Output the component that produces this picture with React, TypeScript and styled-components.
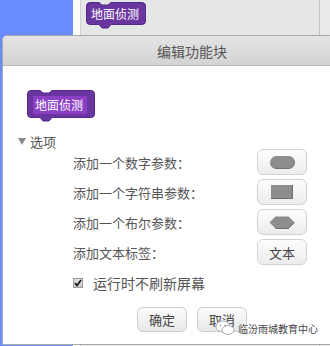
import React from "react";
import styled, { createGlobalStyle } from "styled-components";

const Global = createGlobalStyle`
  html, body { margin: 0; padding: 0; background: #fff; }
  body { font-family: "Noto Sans CJK SC", "Noto Sans", sans-serif; }
`;

const Stage = styled.div`
  position: relative;
  width: 330px;
  height: 346px;
  overflow: hidden;
  display: flex;
  background: #fff;
`;

const Palette = styled.div`
  width: 73px;
  background: #6a8cff;
`;

const Gap = styled.div`
  width: 7px;
  background: #fff;
`;

const Scripts = styled.div`
  flex: 1;
  background: #e5e7e6;
  border-left: 1px solid #cfd1d0;
  border-right: 1px solid #c2c4c3;
  padding: 2px 0 0 5px;
`;

const RightStrip = styled.div`
  width: 10px;
  background: #e9eae9;
`;

const BlockWrap = styled.div<{ $w: number; $h: number; $pad: number }>`
  position: relative;
  width: ${(p) => p.$w}px;
  height: ${(p) => p.$h + 4}px;
  box-sizing: border-box;
  padding: ${(p) => p.$pad}px;
  display: flex;
  align-items: flex-start;
`;

const BlockShape = styled.svg`
  position: absolute;
  left: 0;
  top: 0;
`;

const BlockText = styled.div<{ $hl?: boolean; $w?: number }>`
  position: relative;
  height: 18px;
  ${(p) => (p.$w ? `width: ${p.$w}px;` : "")}
  box-sizing: border-box;
  padding: 0 0 0 2px;
  background: ${(p) => (p.$hl ? "#8b3fc4" : "transparent")};
  color: #fff;
  font-size: 12px;
  line-height: 18px;
  white-space: nowrap;
`;

function blockPath(w: number, h: number) {
  const r = 4, nx = 13, nw = 12, d = 3;
  return `M0.5,${r} Q0.5,0.5 ${r},0.5 L${nx},0.5 L${nx + 3},${d} L${nx + nw - 3},${d} L${nx + nw},0.5 L${w - r},0.5 Q${w - 0.5},0.5 ${w - 0.5},${r} L${w - 0.5},${h - r} Q${w - 0.5},${h - 0.5} ${w - r},${h - 0.5} L${nx + nw},${h - 0.5} L${nx + nw - 3},${h + d} L${nx + 3},${h + d} L${nx},${h - 0.5} L${r},${h - 0.5} Q0.5,${h - 0.5} 0.5,${h - r} Z`;
}

function Block({ w, h, pad, hl, tw }: { w: number; h: number; pad: number; hl?: boolean; tw?: number }) {
  return (
    <BlockWrap $w={w} $h={h} $pad={pad}>
      <BlockShape width={w} height={h + 4} viewBox={`0 0 ${w} ${h + 4}`}>
        <path d={blockPath(w, h)} fill="#6936a0" stroke="#55288a" strokeWidth="1" />
      </BlockShape>
      <BlockText $hl={hl} $w={tw}>地面侦测</BlockText>
    </BlockWrap>
  );
}

const Dialog = styled.div`
  position: absolute;
  left: 2px;
  top: 35px;
  width: 380px;
  height: 310px;
  box-sizing: border-box;
  border: 1px solid #a9a9a9;
  border-radius: 5px 5px 0 0;
  background: #fff;
  display: flex;
  flex-direction: column;
  overflow: hidden;
`;

const TitleBar = styled.div`
  height: 29px;
  flex: none;
  background: linear-gradient(#e4e4e4, #d3d3d3);
  border-bottom: 1px solid #b9b9b9;
  display: flex;
  align-items: center;
  justify-content: center;
  color: #555;
  font-size: 14px;
`;

const Body = styled.div`
  display: flex;
  flex-direction: column;
  padding: 24px 0 0 24px;
`;

const OptionsHeader = styled.div`
  display: flex;
  align-items: center;
  gap: 4px;
  margin: 11px 0 0 -10px;
  height: 16px;
  color: #555;
  font-size: 13px;
`;

const Caret = styled.span`
  width: 0;
  height: 0;
  border-left: 4px solid transparent;
  border-right: 4px solid transparent;
  border-top: 7px solid #8a8a8a;
  margin-left: 1px;
`;

const Rows = styled.div`
  display: flex;
  flex-direction: column;
  gap: 4px;
  margin-left: 46px;
`;

const Row = styled.div`
  display: grid;
  grid-template-columns: 184px 50px;
  align-items: center;
  height: 26px;
`;

const Label = styled.span`
  color: #555;
  font-size: 13px;
  white-space: nowrap;
`;

const ParamButton = styled.div`
  width: 50px;
  height: 26px;
  box-sizing: border-box;
  border: 1px solid #d2d2d2;
  border-radius: 6px;
  background: linear-gradient(#fdfdfd, #ececec);
  display: flex;
  align-items: center;
  justify-content: center;
  color: #444;
  font-size: 13px;
`;

const Pill = styled.span`
  width: 25px;
  height: 13px;
  box-sizing: border-box;
  border-radius: 7px;
  background: #8d8d8d;
  border-right: 1px solid #6f6f6f;
  border-bottom: 1px solid #6f6f6f;
`;

const Rect = styled.span`
  width: 22px;
  height: 14px;
  box-sizing: border-box;
  background: #8d8d8d;
  border-right: 1px solid #6f6f6f;
  border-bottom: 1px solid #6f6f6f;
`;

const CheckRow = styled.label`
  display: flex;
  align-items: center;
  gap: 10px;
  margin: 10px 0 0 46px;
  height: 16px;
  color: #555;
  font-size: 14px;
`;

const CheckBox = styled.span`
  width: 10px;
  height: 10px;
  box-sizing: border-box;
  border: 1px solid #9a9a9a;
  background: linear-gradient(#e2e2e2, #c8c8c8);
  display: flex;
  align-items: center;
  justify-content: center;
`;

const Actions = styled.div`
  display: flex;
  justify-content: center;
  gap: 10px;
  margin: 16px 0 0 -24px;
`;

const ActionButton = styled.div`
  width: 50px;
  height: 25px;
  box-sizing: border-box;
  border: 1px solid #cdcdcd;
  border-radius: 6px;
  background: linear-gradient(#fbfbfb, #e8e8e8);
  display: flex;
  align-items: center;
  justify-content: center;
  color: #444;
  font-size: 13px;
`;

const Watermark = styled.div`
  position: absolute;
  left: 215px;
  top: 320px;
  display: flex;
  align-items: center;
  gap: 3px;
  font-size: 10px;
  color: #444;
  text-shadow: 0 0 2px #fff, 0 0 2px #fff, 0 0 1px #fff;
  white-space: nowrap;
`;

export default function App() {
  return (
    <>
      <Global />
      <Stage>
        <Palette />
        <Gap />
        <Scripts>
          <Block w={60} h={23} pad={3} />
        </Scripts>
        <RightStrip />
        <Dialog>
          <TitleBar>编辑功能块</TitleBar>
          <Body>
            <Block w={68} h={28} pad={6} hl tw={54} />
            <OptionsHeader>
              <Caret />
              选项
            </OptionsHeader>
            <Rows>
              <Row>
                <Label>添加一个数字参数：</Label>
                <ParamButton><Pill /></ParamButton>
              </Row>
              <Row>
                <Label>添加一个字符串参数：</Label>
                <ParamButton><Rect /></ParamButton>
              </Row>
              <Row>
                <Label>添加一个布尔参数：</Label>
                <ParamButton>
                  <svg width="26" height="13" viewBox="0 0 26 13">
                    <path d="M0.5,6.5 L6.5,0.5 L19.5,0.5 L25.5,6.5 L19.5,12.5 L6.5,12.5 Z" fill="#8d8d8d" />
                    <path d="M25.5,6.5 L19.5,12.5 L6.5,12.5" fill="none" stroke="#6f6f6f" strokeWidth="1" />
                  </svg>
                </ParamButton>
              </Row>
              <Row>
                <Label>添加文本标签：</Label>
                <ParamButton>文本</ParamButton>
              </Row>
            </Rows>
            <CheckRow>
              <CheckBox>
                <svg width="8" height="8" viewBox="0 0 8 8">
                  <path d="M1,4 L3,6.5 L7,1" fill="none" stroke="#111" strokeWidth="1.6" />
                </svg>
              </CheckBox>
              运行时不刷新屏幕
            </CheckRow>
            <Actions>
              <ActionButton>确定</ActionButton>
              <ActionButton>取消</ActionButton>
            </Actions>
          </Body>
        </Dialog>
        <Watermark>
          <svg width="20" height="16" viewBox="0 0 20 16">
            <ellipse cx="8" cy="6.5" rx="7" ry="5.5" fill="#fff" stroke="#aaa" strokeWidth="1" />
            <ellipse cx="13" cy="10" rx="6" ry="4.5" fill="#fff" stroke="#aaa" strokeWidth="1" />
            <circle cx="5.5" cy="5.5" r="0.9" fill="#aaa" />
            <circle cx="10" cy="5.5" r="0.9" fill="#aaa" />
          </svg>
          临汾雨城教育中心
        </Watermark>
      </Stage>
    </>
  );
}
